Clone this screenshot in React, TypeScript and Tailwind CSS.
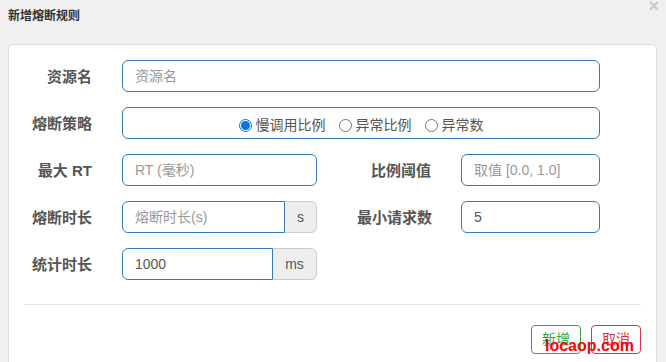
import React from "react";

const font = "font-['Liberation_Sans','Noto_Sans_CJK_SC',sans-serif]";

const Label = ({ text, w }: { text: string; w: string }) => (
  <div className={`${w} shrink-0 text-right text-[15px] font-bold text-[#555] leading-none`}>{text}</div>
);

const Input = ({ w, value, placeholder }: { w: string; value?: string; placeholder?: string }) => (
  <div
    className={`${w} h-[32px] shrink-0 flex items-center px-[12px] border border-[#337ab7] rounded-[6px] text-[14px] ${
      value ? "text-[#555]" : "text-[#999]"
    }`}
  >
    {value ?? placeholder}
  </div>
);

const Group = ({ inputW, addonW, addon, value, placeholder }: { inputW: string; addonW: string; addon: string; value?: string; placeholder?: string }) => (
  <div className="flex h-[32px] shrink-0">
    <div
      className={`${inputW} h-full flex items-center px-[12px] border border-[#337ab7] rounded-l-[6px] text-[14px] ${
        value ? "text-[#555]" : "text-[#999]"
      }`}
    >
      {value ?? placeholder}
    </div>
    <div className={`${addonW} h-full flex items-center justify-center bg-[#eee] border border-l-0 border-[#ccc] rounded-r-[6px] text-[14px] text-[#555]`}>
      {addon}
    </div>
  </div>
);

const Radio = ({ label, checked }: { label: string; checked?: boolean }) => (
  <div className="flex items-center gap-[4px]">
    {checked ? (
      <span className="w-[13px] h-[13px] rounded-full border-[1px] border-[#0b74e5] flex items-center justify-center">
        <span className="w-[9px] h-[9px] rounded-full bg-[#0b74e5]" />
      </span>
    ) : (
      <span className="w-[13px] h-[13px] rounded-full border border-[#767676] bg-white" />
    )}
    <span className="text-[14px] text-[#555]">{label}</span>
  </div>
);

export default function App() {
  return (
    <div className={`${font} relative w-[666px] h-[362px] bg-[#f0f0f0] overflow-hidden`}>
      <div className="h-[44px] px-[8px] pt-[6px]">
        <div className="text-[12px] font-bold text-[#333] leading-[20px]">新增熔断规则</div>
      </div>
      <span className="absolute right-[7px] top-[-7px] text-[18px] font-bold text-[#c8c8c8]">×</span>

      <div className="ml-[8px] mr-[9px] h-[330px] bg-white border border-[#ddd] rounded-t-[5px] pt-[15px] px-[15px]">
        <div className="flex flex-col gap-[15px] -ml-[15px]">
          <div className="flex items-center">
            <Label text="资源名" w="w-[83px]" />
            <div className="ml-[30px]">
              <Input w="w-[478px]" placeholder="资源名" />
            </div>
          </div>

          <div className="flex items-center">
            <Label text="熔断策略" w="w-[83px]" />
            <div className="ml-[30px] w-[478px] h-[32px] border border-[#337ab7] rounded-[6px] flex items-center justify-center gap-[13px] pt-[4px]">
              <Radio label="慢调用比例" checked />
              <Radio label="异常比例" />
              <Radio label="异常数" />
            </div>
          </div>

          <div className="flex items-center">
            <Label text="最大 RT" w="w-[83px]" />
            <div className="ml-[30px]">
              <Input w="w-[195px]" placeholder="RT (毫秒)" />
            </div>
            <Label text="比例阈值" w="w-[114px]" />
            <div className="ml-[30px]">
              <Input w="w-[139px]" placeholder="取值 [0.0, 1.0]" />
            </div>
          </div>

          <div className="flex items-center">
            <Label text="熔断时长" w="w-[83px]" />
            <div className="ml-[30px]">
              <Group inputW="w-[163px]" addonW="w-[32px]" addon="s" placeholder="熔断时长(s)" />
            </div>
            <Label text="最小请求数" w="w-[115px]" />
            <div className="ml-[29px]">
              <Input w="w-[139px]" value="5" />
            </div>
          </div>

          <div className="flex items-center">
            <Label text="统计时长" w="w-[83px]" />
            <div className="ml-[30px]">
              <Group inputW="w-[151px]" addonW="w-[44px]" addon="ms" value="1000" />
            </div>
          </div>
        </div>

        <div className="mt-[24px] border-t border-[#e5e5e5]" />

        <div className="mt-[20px] flex justify-end gap-[10px]">
          <button className="w-[50px] h-[29px] border border-[#28a745] rounded-[4px] text-[14px] text-[#28a745] bg-white">新增</button>
          <button className="w-[50px] h-[29px] border border-[#dc3545] rounded-[4px] text-[14px] text-[#dc3545] bg-white">取消</button>
        </div>
      </div>

      <span className="absolute left-[545px] top-[336px] text-[16px] leading-[20px] font-bold text-[#ff0000] font-['Liberation_Sans',sans-serif]">locaop.com</span>
    </div>
  );
}
